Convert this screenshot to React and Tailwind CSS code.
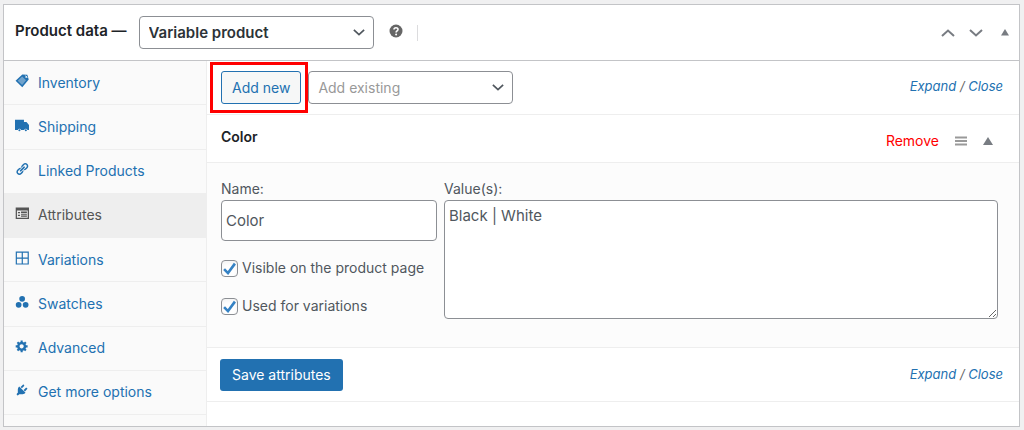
import React from "react";

const tabs = [
  { name: "Inventory", icon: "tag" },
  { name: "Shipping", icon: "truck" },
  { name: "Linked Products", icon: "link" },
  { name: "Attributes", icon: "form", active: true },
  { name: "Variations", icon: "grid" },
  { name: "Swatches", icon: "dots" },
  { name: "Advanced", icon: "gear" },
  { name: "Get more options", icon: "plug" },
];

const icons = {
  tag: (
    <>
      <path d="M10.400 0.600 17.600 1.200 19.600 8 10.400 19 0.800 9.800z" fill="currentColor" />
      <path d="M10.200 3.600 15.800 9l-5.600 6.800-6.400-6z" fill="#fff" fillOpacity="0.35" />
      <path d="M14.500 1.800l3.600 3.600" fill="none" stroke="#fafafa" strokeOpacity="0.6" strokeWidth="1.200" />
      <circle cx="16" cy="4.200" r="1.200" fill="#fafafa" />
    </>
  ),
  truck: (
    <>
      <path d="M0 2.500h12.800v3.300h3.600L20 10v7h-2.200a2.400 2.400 0 0 0-4.600 0H8.600a2.400 2.400 0 0 0-4.600 0H0z" fill="currentColor" />
      <circle cx="6.300" cy="17.600" r="1.500" fill="currentColor" />
      <circle cx="15.500" cy="17.600" r="1.500" fill="currentColor" />
    </>
  ),
  link: (
    <path
      fill="currentColor"
      d="M17.74 2.76c1.68 1.69 1.68 4.41 0 6.1l-1.53 1.52c-1.12 1.12-2.7 1.47-4.14 1.09l2.62-2.61.76-.77.76-.76c.84-.84.84-2.2 0-3.04-.84-.85-2.2-.85-3.04 0l-.77.76-3.38 3.38c-.37-1.44-.02-3.02 1.1-4.14l1.52-1.53c1.69-1.68 4.42-1.68 6.1 0zM8.59 13.43l5.34-5.34c.42-.42.42-1.1 0-1.52-.44-.43-1.13-.39-1.53 0l-5.33 5.34c-.42.42-.42 1.1 0 1.52.44.43 1.13.39 1.52 0zm-.76 2.29l4.14-4.15c.38 1.44.03 3.02-1.09 4.14l-1.52 1.53c-1.69 1.68-4.41 1.68-6.1 0-1.68-1.68-1.68-4.42 0-6.1l1.53-1.52c1.12-1.12 2.7-1.47 4.14-1.1l-4.14 4.15c-.85.84-.85 2.2 0 3.05.84.84 2.2.84 3.04 0z"
    />
  ),
  form: (
    <path
      fill="currentColor"
      fillRule="evenodd"
      d="M1 2h19v16.500H1zM2.800 6.600v10.100h15.400V6.600zM4.200 8.400h3v1.800h-3zM4.200 12.600h3v1.800h-3zM8.600 7.900h8.400v2H8.600zM8.600 10.900h8.400v1.700H8.600zM8.600 13.600h8.400v1.900H8.600z"
    />
  ),
  grid: <path fill="none" stroke="currentColor" strokeWidth="1.700" d="M1.900 1.600h17v17h-17zM10.400 1.600v17M1.900 10.100h17" />,
  dots: (
    <g fill="currentColor">
      <circle cx="10.200" cy="5.500" r="4.100" />
      <circle cx="5.200" cy="14" r="4.100" />
      <circle cx="15.200" cy="14" r="4.100" />
    </g>
  ),
  gear: (
    <path
      fill="currentColor"
      d="M18 12h-2.18c-.17.7-.44 1.35-.81 1.93l1.54 1.54-2.1 2.1-1.54-1.54c-.58.36-1.23.63-1.91.79V19H8v-2.18c-.68-.16-1.33-.43-1.91-.79l-1.54 1.54-2.12-2.12 1.54-1.54c-.36-.58-.63-1.23-.79-1.91H1V9.03h2.17c.16-.7.44-1.35.8-1.94L2.43 5.55l2.1-2.1 1.54 1.54c.58-.37 1.24-.64 1.93-.81V2h3v2.18c.68.16 1.33.43 1.91.79l1.54-1.54 2.12 2.12-1.54 1.54c.36.59.64 1.24.8 1.94H18V12zm-8.5 1.5c1.66 0 3-1.34 3-3s-1.34-3-3-3-3 1.34-3 3 1.34 3 3 3z"
    />
  ),
  plug: (
    <path
      fill="currentColor"
      d="M13.11 4.36L9.87 7.6 8 5.73l3.24-3.24c.35-.34 1.05-.2 1.56.32.52.51.66 1.21.31 1.55zm-8 1.77l.91-1.12 9.01 9.01-1.19.84c-.71.71-2.63 1.16-3.82 1.16H6.14L4.9 17.26c-.59.59-1.54.59-2.12 0-.59-.58-.59-1.53 0-2.12l1.24-1.24v-3.88c0-1.13.4-3.19 1.09-3.89zm7.26 3.97l3.24-3.24c.34-.35 1.04-.21 1.55.31.52.51.66 1.21.31 1.55l-3.24 3.25z"
    />
  ),
};

function Icon({ name }) {
  return (
    <svg viewBox="0 0 20 20" className="mb-1 size-3.5 shrink-0" aria-hidden="true">
      {icons[name]}
    </svg>
  );
}

function Chevron({ up, className }) {
  return (
    <svg viewBox="0 0 14 8" className={className} aria-hidden="true">
      <path d={up ? "M1 7l6-5.500 6 5.500" : "M1 1l6 5.500L13 1"} fill="none" stroke="currentColor" strokeWidth="2" />
    </svg>
  );
}

function Triangle({ className }) {
  return (
    <svg viewBox="0 0 10 8" className={className} aria-hidden="true">
      <path d="M5 0l5 8H0z" fill="currentColor" />
    </svg>
  );
}

function SelectBox({ label, options, className }) {
  return (
    <div className="relative flex items-center">
      <select
        aria-label={label}
        className={"h-[33px] appearance-none rounded border border-[#8c8f94] bg-white pl-[9px] pr-8 outline-none " + className}
      >
        {options.map((o) => (
          <option key={o}>{o}</option>
        ))}
      </select>
      <Chevron className="pointer-events-none absolute right-[9px] w-3 text-[#50575e]" />
    </div>
  );
}

function ExpandClose() {
  return (
    <p className="text-[13px] italic text-[#666]">
      <a href="#expand" className="text-[#2271b1]">Expand</a> / <a href="#close" className="text-[#2271b1]">Close</a>
    </p>
  );
}

function CheckRow({ label }) {
  return (
    <label className="flex items-center gap-1">
      <span className="grid size-[17px] place-items-center">
        <input
          type="checkbox"
          defaultChecked
          className="peer col-start-1 row-start-1 size-[17px] appearance-none rounded border border-[#8c8f94] bg-white shadow-inner"
        />
        <svg viewBox="0 0 12 12" className="pointer-events-none invisible col-start-1 row-start-1 size-[13px] peer-checked:visible" aria-hidden="true">
          <path d="M1 6.500l3.600 3.700L11 1.500" fill="none" stroke="#3582c4" strokeWidth="2.400" />
        </svg>
      </span>
      {label}
    </label>
  );
}

export default function App() {
  return (
    <div className="bg-[#f0f0f1] p-1 pl-[3px] font-['Inter',sans-serif] text-sm text-[#50575e]">
      <section className="border border-[#c3c4c7] bg-white">
        <header className="flex h-14 items-center border-b border-[#c3c4c7] pl-[11px] pr-2.5">
          <h2 className="mr-3 pb-1 text-[15px] font-semibold text-[#1d2327]">Product data —</h2>
          <SelectBox
            label="Product type"
            options={["Variable product", "Simple product"]}
            className="w-[235px] text-[15px] font-semibold text-[#2c3338]"
          />
          <button type="button" aria-label="Help" className="mb-1 ml-[15px]">
            <svg viewBox="0 0 14 14" className="size-3.5" aria-hidden="true">
              <circle cx="7" cy="7" r="6.500" fill="#666" />
              <path d="M5 5.600C5 3.200 9 3.200 9 5.500 9 6.900 7.100 6.800 7.100 8.400" fill="none" stroke="#fff" strokeWidth="1.600" />
              <circle cx="7.100" cy="10.400" r="1" fill="#fff" />
            </svg>
          </button>
          <span className="ml-3.5 h-4 w-px bg-[#dcdcde]" />
          <div className="ml-auto flex items-center text-[#787c82]">
            <button type="button" aria-label="Move up" className="mr-3.5">
              <Chevron up className="w-3.5" />
            </button>
            <button type="button" aria-label="Move down" className="mr-[18px]">
              <Chevron className="w-3.5" />
            </button>
            <button type="button" aria-label="Toggle panel">
              <Triangle className="w-2" />
            </button>
          </div>
        </header>

        <div className="flex">
          <nav className="flex w-[203px] shrink-0 flex-col border-r border-[#eee] bg-[#fafafa] pb-[11px]">
            {tabs.map((t) => (
              <a
                key={t.name}
                href={"#" + t.icon}
                className={
                  "flex flex-1 items-center gap-[9px] border-b border-[#eee] pl-[11px] " +
                  (t.active ? "bg-[#eee] text-[#555]" : "text-[#2271b1]")
                }
              >
                <Icon name={t.icon} />
                {t.name}
              </a>
            ))}
          </nav>

          <main className="min-w-0 flex-1 pb-6">
            <div className="flex h-[54px] items-center border-b border-[#eee] pl-[3px] pr-4">
              <div className="border-[3px] border-[#f00] py-1.5 pl-2 pr-1">
                <button type="button" className="block h-[33px] rounded-[3px] border border-[#2271b1] bg-[#f6f7f7] px-2.5 text-[#2271b1]">
                  Add new
                </button>
              </div>
              <SelectBox label="Add existing" options={["Add existing"]} className="w-[205px] text-[#999]" />
              <div className="ml-auto pb-0.5">
                <ExpandClose />
              </div>
            </div>

            <div className="flex h-12 items-center border-b border-[#eee] pl-3.5 pr-[26px]">
              <h3 className="pb-1 font-semibold text-[#1d2327]">Color</h3>
              <div className="ml-auto flex items-center gap-4 pt-1 text-[#787c82]">
                <a href="#remove" className="text-[#f00]">Remove</a>
                <button type="button" aria-label="Reorder">
                  <svg viewBox="0 0 12 10" className="w-3" aria-hidden="true">
                    <path d="M0 1.500h12M0 5h12M0 8.500h12" stroke="#999" strokeWidth="1.800" />
                  </svg>
                </button>
                <button type="button" aria-label="Toggle attribute">
                  <Triangle className="w-2.5" />
                </button>
              </div>
            </div>

            <div className="flex gap-[7px] border-b border-[#eee] bg-[#fcfcfc] pb-7 pl-3.5 pr-[21px] pt-4">
              <div className="flex w-[216px] flex-col">
                <label htmlFor="attr-name">Name:</label>
                <input
                  id="attr-name"
                  defaultValue="Color"
                  className="mb-[17px] mt-px h-[41px] rounded border border-[#8c8f94] bg-white px-1 text-[15px] outline-none"
                />
                <div className="flex flex-col gap-[18px]">
                  <CheckRow label="Visible on the product page" />
                  <CheckRow label="Used for variations" />
                </div>
              </div>
              <div className="flex min-w-0 flex-1 flex-col">
                <label htmlFor="attr-values">Value(s):</label>
                <textarea
                  id="attr-values"
                  defaultValue="Black | White"
                  className="mt-px h-[119px] w-full rounded border border-[#8c8f94] bg-white p-1 text-[15px] outline-none"
                />
              </div>
            </div>

            <div className="flex h-[54px] items-center border-b border-[#eee] pl-[13px] pr-4">
              <button type="button" className="h-8 rounded-[3px] bg-[#2271b1] px-3 text-white">
                Save attributes
              </button>
              <div className="ml-auto">
                <ExpandClose />
              </div>
            </div>
          </main>
        </div>
      </section>
    </div>
  );
}
